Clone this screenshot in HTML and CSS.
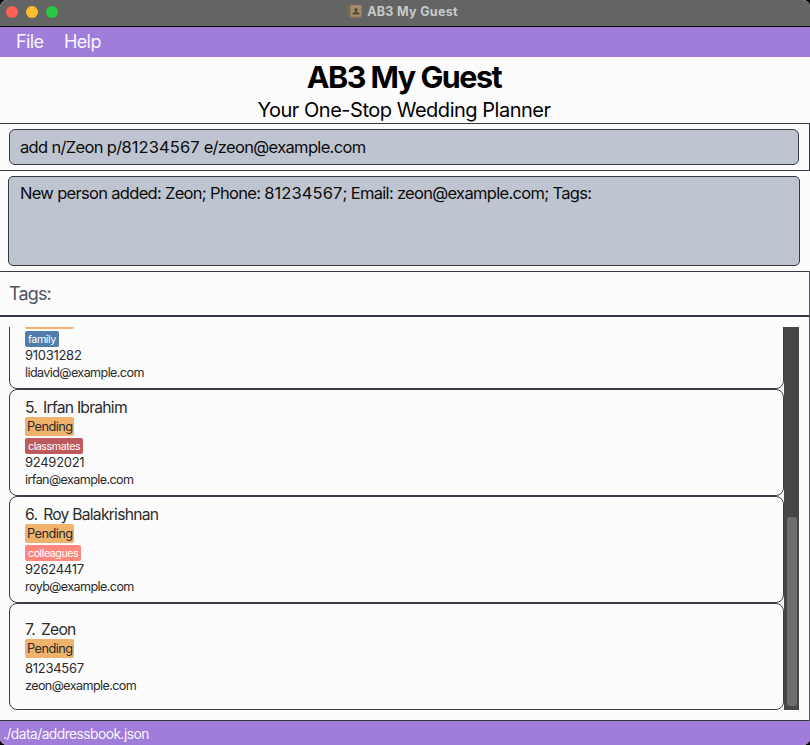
FILE: index.html
```html
<!DOCTYPE html>
<html lang="en">
<head>
<meta charset="utf-8">
<title>AB3 My Guest</title>
<link rel="stylesheet" href="styles.css">
</head>
<body>
<div class="window">
  <header class="titlebar">
    <div class="lights"><span class="light red"></span><span class="light yellow"></span><span class="light green"></span></div>
    <div class="caption">
      <svg class="app-icon" width="14" height="13" viewBox="0 0 14 13"><rect x="0.5" y="0" width="13" height="12.5" rx="1" fill="#a48c68"/><rect x="0.5" y="0" width="2" height="12.5" fill="#74644f"/><rect x="1" y="11.5" width="12.5" height="1" fill="#857052"/><circle cx="8" cy="4.5" r="1.6" fill="#544a3e"/><path d="M7.2 5h1.6v2l2.7 1v1.6h-7V8l2.7-1z" fill="#544a3e"/></svg>
      <span class="caption-text">AB3 My Guest</span>
    </div>
  </header>
  <nav class="menu"><span class="file">File</span><span class="help">Help</span></nav>
  <section class="hero">
    <h1><span>AB3 My Guest</span></h1>
    <p><span>Your One-Stop Wedding Planner</span></p>
  </section>
  <section class="command"><div class="command-box"><span>add n/Zeon p/<span class="num">81234567</span> e/zeon@example.com</span></div></section>
  <section class="result"><div class="result-box"><span>New person added: Zeon; Phone: <span class="num">81234567</span>; Email: zeon@example.com; Tags:</span></div></section>
  <section class="filter"><span>Tags:</span></section>
  <main class="people">
    <div class="list">
      <article class="card clipped">
        <div class="status"></div>
        <div class="tags"><span class="tag family">family</span></div>
        <div class="detail phone"><span>91031282</span></div>
        <div class="detail"><span>lidavid@example.com</span></div>
      </article>
      <article class="card">
        <div class="name"><span>5.</span><span>Irfan Ibrahim</span></div>
        <div class="status"><span>Pending</span></div>
        <div class="tags"><span class="tag classmates">classmates</span></div>
        <div class="detail phone"><span>92492021</span></div>
        <div class="detail"><span>irfan@example.com</span></div>
      </article>
      <article class="card">
        <div class="name"><span>6.</span><span>Roy Balakrishnan</span></div>
        <div class="status"><span>Pending</span></div>
        <div class="tags"><span class="tag colleagues">colleagues</span></div>
        <div class="detail phone"><span>92624417</span></div>
        <div class="detail"><span>royb@example.com</span></div>
      </article>
      <article class="card untagged">
        <div class="name"><span>7.</span><span>Zeon</span></div>
        <div class="status"><span>Pending</span></div>
        <div class="detail phone"><span>81234567</span></div>
        <div class="detail"><span>zeon@example.com</span></div>
      </article>
    </div>
    <div class="scrollbar"><div class="thumb"></div></div>
  </main>
  <footer class="statusbar"><span>./data/addressbook.json</span></footer>
</div>
</body>
</html>
```
FILE: styles.css
```css
* { box-sizing: border-box; }
body { margin: 0; background: #000; font-family: Inter, "Liberation Sans", sans-serif; color: #2b2b2b; }
.window { width: 810px; height: 745px; display: flex; flex-direction: column; overflow: hidden; border-radius: 7px; background: #fcfcfc; white-space: nowrap; }
.titlebar { height: 27px; background: #646464; border-bottom: 1px solid #000; display: grid; grid-template-columns: 58px 1fr 58px; align-items: center; padding-bottom: 2px; }
.lights { display: flex; gap: 8px; padding-left: 6px; }
.light { width: 12px; height: 12px; border-radius: 50%; flex: none; }
.red { background: #ff5f57; }
.yellow { background: #febc2e; }
.green { background: #28c840; }
.caption { display: flex; align-items: center; justify-content: center; gap: 5px; padding: 0 4px 2px 0; }
.app-icon { flex: none; }
.caption-text { font-size: 12.5px; font-weight: 700; color: #c9c9c9; letter-spacing: 0.3px; }
.menu { height: 30px; background: #a07cdb; color: #f8f5fd; display: flex; padding-left: 16px; gap: 20.5px; font-size: 18px; line-height: 30px; letter-spacing: -0.6px; }
.hero { height: 66px; color: #000; text-align: center; }
h1 { margin: 0; font-size: 30.5px; line-height: 40px; font-weight: 700; letter-spacing: -1.5px; padding-right: 2px; }
.hero p { margin: 0; font-size: 20px; line-height: 26px; letter-spacing: -0.48px; padding-right: 2px; }
.command { height: 47px; border-top: 1px solid #383844; border-right: 1px solid #383844; padding: 5px 10px 0 9px; }
.command-box { height: 36px; background: #bec4d0; border: 1px solid #383844; border-radius: 6px; color: #0c0c0c; padding-left: 10px; font-size: 16.5px; line-height: 35px; letter-spacing: -0.67px; }
.num { letter-spacing: 0.1px; }
.result { height: 101px; border-top: 1px solid #383844; padding: 5px 10px 0 8px; }
.result-box { height: 90px; background: #bec4d0; border: 1px solid #383844; border-radius: 5px; color: #0c0c0c; padding: 4px 0 0 11px; font-size: 16.5px; line-height: 25px; letter-spacing: -0.69px; }
.filter { height: 46px; border-top: 1px solid #383844; border-right: 1px solid #5b5b61; border-bottom: 2px solid #383844; color: #50535a; padding-left: 9px; font-size: 18px; line-height: 44px; letter-spacing: -0.85px; }
.people { height: 404px; border-right: 1px solid #5b5b61; border-bottom: 1px solid #383844; padding: 10px 10px 10px 9px; display: flex; }
.list { width: 775px; height: 383px; overflow: hidden; display: flex; flex-direction: column; justify-content: flex-end; }
.card { height: 107px; flex: none; border: 1px solid #3b3e4a; border-radius: 8px; padding: 8px 0 0 15px; }
.card.clipped { padding-top: 27px; }
.card.untagged { padding-top: 16px; }
.name { display: flex; gap: 6px; height: 19px; font-size: 15.7px; line-height: 19px; letter-spacing: -0.77px; }
.status { height: 19px; width: 49px; background: #efb36d; border-radius: 2px; padding-left: 2px; font-size: 12.8px; line-height: 19px; letter-spacing: -0.58px; }
.tags { display: flex; height: 18px; padding-top: 2px; }
.tag { height: 16px; border-radius: 2px; color: #fff; padding-left: 3px; font-size: 10.7px; line-height: 17px; letter-spacing: -0.45px; }
.family { width: 34px; background: #507dac; }
.classmates { width: 58px; background: #bd5a5d; }
.colleagues { width: 56px; background: #ff877e; }
.detail { height: 17px; font-size: 12.6px; line-height: 17px; letter-spacing: -0.6px; }
.phone { font-size: 13px; letter-spacing: -0.28px; }
.untagged .phone { height: 19px; padding-top: 2px; }
.scrollbar { width: 15px; background: #464646; padding: 190px 2px 4px 3px; }
.thumb { height: 189px; background: #6e6e6e; border-radius: 3px; }
.statusbar { height: 24px; background: #a07cdb; color: #f8f5fd; padding-left: 3px; font-size: 13.8px; line-height: 26px; letter-spacing: -0.54px; }
```
